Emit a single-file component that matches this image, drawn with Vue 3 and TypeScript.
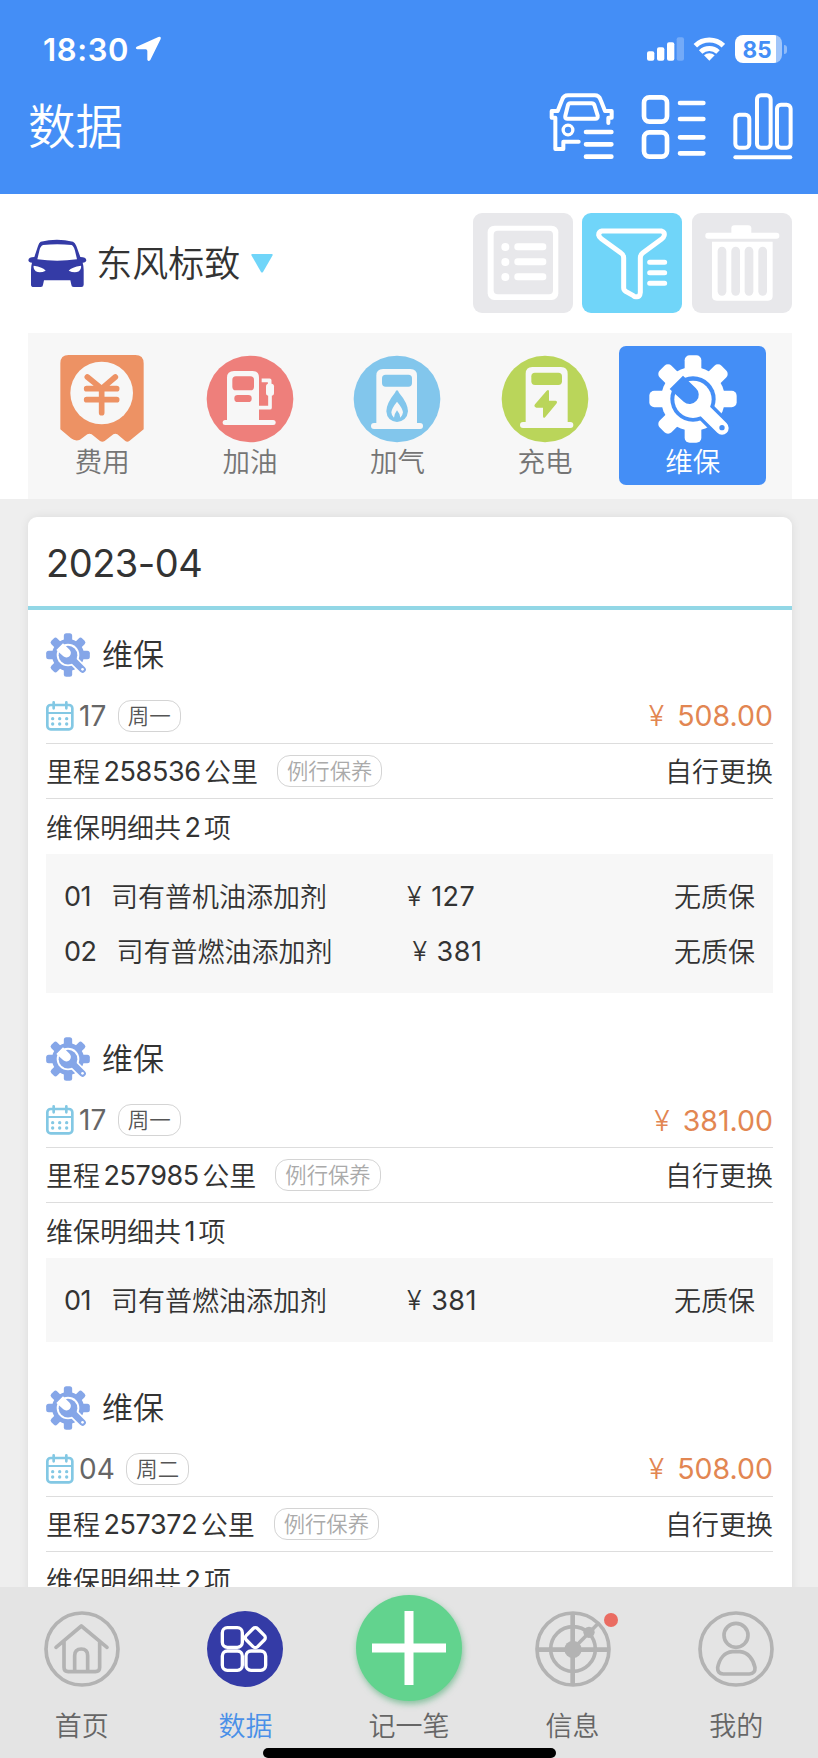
<script setup lang="ts">
interface Part {
  no: string
  name: string
  price: string
  warranty: string
}
interface MaintenanceRecord {
  day: string
  week: string
  amount: string
  mileage: string
  parts: Part[]
  count: number
}

const records: MaintenanceRecord[] = [
  {
    day: '17', week: '周一', amount: '508.00', mileage: '258536', count: 2,
    parts: [
      { no: '01', name: '司有普机油添加剂', price: '127', warranty: '无质保' },
      { no: '02', name: '司有普燃油添加剂', price: '381', warranty: '无质保' },
    ],
  },
  {
    day: '17', week: '周一', amount: '381.00', mileage: '257985', count: 1,
    parts: [{ no: '01', name: '司有普燃油添加剂', price: '381', warranty: '无质保' }],
  },
  {
    day: '04', week: '周二', amount: '508.00', mileage: '257372', count: 2,
    parts: [],
  },
]

const teeth: number[] = [0, 45, 90, 180, 225, 270, 315]
</script>

<template>
  <div class="screen">
    <svg class="defs" width="0" height="0">
      <symbol id="gear" viewBox="718 495 264 264">
        <g fill="currentColor">
          <circle cx="850" cy="627" r="96" />
          <rect v-for="a in teeth" :key="a" x="825" y="496" width="50" height="60" rx="15" :transform="`rotate(${a} 850 627)`" />
        </g>
        <circle cx="850" cy="627" r="68" fill="var(--hole)" />
        <path d="M872 649L950 727" stroke="var(--hole)" stroke-width="60" />
        <circle cx="850" cy="628" r="56" fill="currentColor" />
        <path d="M862 640L937 714" stroke="currentColor" stroke-width="40" stroke-linecap="round" />
        <path d="M780 597L820 557L858 594A27 27 0 0 1 822 635Z" fill="var(--hole)" />
        <circle cx="937" cy="713" r="8" fill="var(--hole)" />
      </symbol>
    </svg>

    <header class="header">
      <div class="status">
        <span class="time">18:30</span>
        <svg class="loc" width="26" height="26" viewBox="403 110 78 78">
          <path fill="#fff" d="M473 113Q482 110 480 119L449 182Q443 189 440 181V155Q440 150 435 150H410Q402 147 408 142Z" />
        </svg>
        <svg class="signal" width="78" height="28" viewBox="712 105 234 84">
          <g fill="#fff">
            <rect x="712" y="154" width="22" height="28" rx="6" />
            <rect x="742" y="142" width="22" height="40" rx="6" />
            <rect x="772" y="127" width="22" height="55" rx="6" />
            <rect x="801" y="112" width="22" height="70" rx="6" opacity=".25" />
            <path d="M899 182L883 166A23 23 0 0 1 915 166Z" />
          </g>
          <path fill="none" stroke="#fff" stroke-width="15" d="M857 137A60 60 0 0 1 941 137M873 156A38 38 0 0 1 925 156" />
        </svg>
        <div class="battery"><span>85</span></div>
        <i class="nub"></i>
      </div>
      <div class="titlebar">
        <h1>数据</h1>
        <svg class="hi first" width="66.7" height="70" viewBox="415 275 200 210">
          <g fill="none" stroke="#fff" stroke-linecap="round" stroke-linejoin="round">
            <path stroke-width="12" d="M596 368V352H606V332H586L573 299Q568 285 555 285H475Q462 285 457 299L444 332H426V352H437V446H461V424H507" />
            <path stroke-width="12" d="M482 309H546Q552 309 554 314L564 346Q565 355 557 355H472Q465 355 467 346L475 314Q477 309 482 309Z" />
            <circle cx="475" cy="389" r="14.5" stroke-width="10" />
            <path stroke-width="14" d="M529 395H605M529 432H605M529 469H605" />
          </g>
        </svg>
        <svg class="hi" width="66.7" height="70" viewBox="690 275 200 210">
          <g fill="none" stroke="#fff" stroke-width="14" stroke-linecap="round">
            <rect x="702" y="291" width="69" height="73" rx="16" />
            <rect x="702" y="396" width="69" height="73" rx="16" />
            <path d="M810 308H880M810 356H880M810 411H880M810 459H880" />
          </g>
        </svg>
        <svg class="hi" width="61.3" height="70" viewBox="968 275 184 210">
          <g fill="none" stroke="#fff" stroke-width="12">
            <rect x="978" y="343" width="42" height="99" rx="12" />
            <rect x="1043" y="285" width="41" height="157" rx="12" />
            <rect x="1103" y="313" width="41" height="129" rx="12" />
            <path stroke-linecap="round" d="M978 471H1143" />
          </g>
        </svg>
      </div>
    </header>

    <section class="panel">
      <div class="vehicle">
        <svg width="58.7" height="49" viewBox="83 147 176 147">
          <path fill="#343ba6" fill-rule="evenodd" d="M121 155Q170 143 218 155Q224 158 228 168L240 201Q257 201 258 211Q257 218 247 218Q250 228 250 240V284Q250 291 243 291H220Q213 291 213 284L210 271H131L128 284Q128 291 121 291H100Q92 291 92 284V240Q92 228 95 218Q85 218 84 211Q85 201 102 201L113 168Q116 158 121 155ZM128 165Q120 168 117 182L111 208Q170 216 230 208L224 182Q220 168 214 165Q170 160 128 165ZM100 227Q98 238 106 244Q120 250 136 242Q128 231 100 227ZM242 227Q214 231 205 242Q222 250 236 244Q244 238 242 227Z" />
        </svg>
        <span class="carname">东风标致</span>
        <svg class="caret" width="22" height="19" viewBox="0 0 22 19"><path fill="#70d5f9" d="M1 0H21Q22 0 21.5 1.500L12 18Q11 19 10 18L.5 1.500Q0 0 1 0Z" /></svg>
        <div class="tools">
          <div class="tool">
            <svg width="100" height="100" viewBox="190 69 300 300">
              <rect x="234" y="107" width="212" height="223" rx="20" fill="#fff" />
              <rect x="252" y="122" width="178" height="191" rx="12" fill="#e8e8eb" />
              <g fill="#fff">
                <circle cx="287" cy="171" r="12" /><circle cx="287" cy="216" r="12" /><circle cx="287" cy="261" r="12" />
                <rect x="314" y="160" width="96" height="21" rx="10" /><rect x="314" y="205" width="96" height="21" rx="10" /><rect x="314" y="250" width="96" height="21" rx="10" />
              </g>
            </svg>
          </div>
          <div class="tool on">
            <svg width="100" height="100" viewBox="518 70 300 300">
              <g fill="none" stroke="#fff" stroke-width="15" stroke-linecap="round" stroke-linejoin="round">
                <path d="M578 124H756Q768 127 764 139Q763 143 758 147L700 190Q693 195 693 204V308Q692 324 679 321Q676 321 672 318L649 305Q643 301 643 294V204Q643 195 635 190L576 147Q569 142 568 136Q568 126 578 124Z" />
                <path d="M721 218H766M721 249H766M721 281H766" />
              </g>
            </svg>
          </div>
          <div class="tool">
            <svg width="100" height="100" viewBox="848 70 300 300">
              <g fill="#fff">
                <rect x="888" y="129" width="222" height="18" rx="8" />
                <rect x="966" y="107" width="60" height="34" rx="9" />
                <path d="M908 156H1090V319Q1090 333 1076 333H922Q908 333 908 319Z" />
              </g>
              <g fill="#e8e8eb">
                <rect x="925" y="171" width="26" height="147" rx="13" /><rect x="966" y="171" width="26" height="147" rx="13" />
                <rect x="1006" y="171" width="26" height="147" rx="13" /><rect x="1047" y="171" width="26" height="147" rx="13" />
              </g>
            </svg>
          </div>
        </div>
      </div>

      <nav class="filters">
        <div class="filter">
          <svg width="88" height="88" viewBox="174 495 264 264">
            <path fill="#ed9264" d="M206 495H406Q431 495 431 520V718L388 753Q382 757 376 753L352 733Q346 729 340 733L314 753Q307 758 300 753L275 733Q268 729 262 733L240 749Q226 755 213 745L181 718V520Q181 495 206 495Z" />
            <circle cx="305" cy="609" r="94" fill="#f7f7f7" />
            <path fill="none" stroke="#ed9264" stroke-width="17" stroke-linecap="round" stroke-linejoin="round" d="M262 561L305 596L346 561M260 596H350M260 629H350M305 598V668" />
          </svg>
          <span>费用</span>
        </div>
        <div class="filter">
          <svg width="88" height="88" viewBox="616 495 264 264">
            <circle cx="748" cy="627" r="130" fill="#ee7f7b" />
            <g fill="#f7f7f7">
              <path d="M700 543H755Q775 543 775 563V691H679V563Q679 543 700 543Z" />
              <rect x="666" y="690" width="159" height="15" rx="7.500" />
              <rect x="796" y="581" width="24" height="36" rx="8" />
            </g>
            <path fill="none" stroke="#f7f7f7" stroke-width="11" stroke-linejoin="round" d="M783 571H807V590M808 610V653H774" />
            <rect x="695" y="559" width="65" height="42" rx="11" fill="#ee7f7b" />
            <rect x="701" y="615" width="52" height="21" rx="10" fill="#ee7f7b" />
          </svg>
          <span>加油</span>
        </div>
        <div class="filter">
          <svg width="88" height="88" viewBox="1059 495 264 264">
            <circle cx="1191" cy="627" r="130" fill="#82c6ec" />
            <g fill="#f7f7f7">
              <path d="M1149 537H1231Q1251 537 1251 557V702H1129V557Q1129 537 1149 537Z" />
              <rect x="1113" y="699" width="156" height="18" rx="9" />
            </g>
            <rect x="1146" y="554" width="90" height="36" rx="11" fill="#82c6ec" />
            <path fill="#82c6ec" d="M1191 601Q1194 601 1197 608Q1224 640 1224 664Q1221 693 1191 696Q1161 693 1159 664Q1159 640 1185 608Q1188 601 1191 601Z" />
            <path fill="#f7f7f7" d="M1191 635Q1208 655 1209 667Q1208 676 1201 683Q1199 670 1191 661Q1184 670 1182 683Q1174 676 1174 667Q1175 655 1191 635Z" />
          </svg>
          <span>加气</span>
        </div>
        <div class="filter">
          <svg width="88" height="88" viewBox="276 495 264 264">
            <circle cx="408" cy="627" r="130" fill="#bad55a" />
            <g fill="#f7f7f7">
              <path d="M370 531H456Q476 531 476 551V700H350V551Q350 531 370 531Z" />
              <rect x="333" y="696" width="160" height="18" rx="9" />
            </g>
            <rect x="367" y="548" width="92" height="37" rx="11" fill="#bad55a" />
            <path fill="#bad55a" d="M413 602Q419 597 420 604V632H440Q447 634 442 641L409 681Q403 687 402 679V653H382Q373 650 378 643Z" />
          </svg>
          <span>充电</span>
        </div>
        <div class="filter active">
          <svg width="88" height="88"><use href="#gear" /></svg>
          <span>维保</span>
        </div>
      </nav>
    </section>

    <main class="content">
      <div class="card">
        <h2>2023-04</h2>
        <article v-for="(r, i) in records" :key="i" class="entry">
          <div class="row kind">
            <svg width="44" height="44"><use href="#gear" /></svg>
            <span>维保</span>
          </div>
          <div class="row line date">
            <svg class="cal" width="28" height="30" viewBox="138 602 84 90">
              <g fill="none" stroke="#83c8e4" stroke-width="8">
                <rect x="142" y="614" width="75" height="73" rx="10" />
                <path stroke-width="6" d="M142 638H217" />
                <path stroke-linecap="round" d="M161 606V624M199 606V624" />
              </g>
              <g fill="#83c8e4">
                <circle v-for="n in 6" :key="n" :cx="158 + ((n - 1) % 3) * 21" :cy="n > 3 ? 671 : 655" r="5" />
              </g>
            </svg>
            <span class="day">{{ r.day }}</span>
            <span class="tag">{{ r.week }}</span>
            <span class="amount">¥<b>{{ r.amount }}</b></span>
          </div>
          <div class="row line">
            <span>里程</span><span class="num">{{ r.mileage }}</span><span>公里</span>
            <span class="tag pale">例行保养</span>
            <span class="end">自行更换</span>
          </div>
          <div class="row"><span>维保明细共</span><span class="num">{{ r.count }}</span><span>项</span></div>
          <div v-if="r.parts.length" class="parts">
            <div v-for="p in r.parts" :key="p.no" class="part">
              <span class="no">{{ p.no }}</span>
              <span class="pname">{{ p.name }}</span>
              <span class="price">¥<b>{{ p.price }}</b></span>
              <span class="end">{{ p.warranty }}</span>
            </div>
          </div>
        </article>
      </div>
    </main>

    <footer class="tabbar">
      <div class="tab">
        <svg width="76" height="76" viewBox="133 124 228 228">
          <g fill="none" stroke="#b3b3b3" stroke-width="11" stroke-linecap="round" stroke-linejoin="round">
            <circle cx="247" cy="238" r="108" />
            <path d="M169 233L245 169L322 233M193 214V293Q193 306 206 306H287Q300 306 300 293V214M225 305V258Q225 238 245 238Q264 238 264 258V305" />
          </g>
        </svg>
        <span>首页</span>
      </div>
      <div class="tab current">
        <svg width="76" height="76" viewBox="624 124 228 228">
          <circle cx="738" cy="238" r="114" fill="#343ba6" />
          <g fill="none" stroke="#fff" stroke-width="10">
            <rect x="670" y="174" width="60" height="59" rx="15" />
            <rect x="670" y="244" width="60" height="58" rx="15" />
            <rect x="741" y="244" width="59" height="58" rx="15" />
            <rect x="745" y="180" width="48" height="48" rx="10" transform="rotate(45 769 204)" />
          </g>
        </svg>
        <span>数据</span>
      </div>
      <div class="tab">
        <div class="add">
          <svg width="76" height="76" viewBox="0 0 76 76"><path stroke="#fff" stroke-width="9" d="M1 38H75M38 1V75" /></svg>
        </div>
        <span>记一笔</span>
      </div>
      <div class="tab">
        <div class="iconbox">
          <svg width="76" height="76" viewBox="381 124 228 228">
            <g fill="none" stroke="#b3b3b3" stroke-width="11">
              <circle cx="495" cy="238" r="108" />
              <circle cx="495" cy="238" r="67" />
              <path stroke-width="14" d="M386 240H604M494 129V347" />
              <path d="M495 238L572 160" />
            </g>
            <circle cx="495" cy="239" r="26" fill="#b3b3b3" />
            <circle cx="543" cy="188" r="17" fill="#b3b3b3" />
          </svg>
          <i class="badge"></i>
        </div>
        <span>信息</span>
      </div>
      <div class="tab">
        <svg width="76" height="76" viewBox="872 124 228 228">
          <g fill="none" stroke="#b3b3b3" stroke-width="11">
            <circle cx="986" cy="238" r="108" />
            <circle cx="986" cy="197" r="36" />
            <path d="M975 246H998C1022 248 1038 268 1043 294Q1044 312 1026 313H948Q930 312 931 294C936 268 951 248 975 246Z" />
          </g>
        </svg>
        <span>我的</span>
      </div>
      <i class="home"></i>
    </footer>
  </div>
</template>

<style>
body { margin: 0; }
</style>

<style scoped>
* { box-sizing: border-box; }
svg { display: block; flex: none; }
.defs { position: absolute; }
.screen {
  width: 818px;
  height: 1758px;
  display: flex;
  flex-direction: column;
  overflow: hidden;
  background: #eee;
  color: #333;
  font-family: Inter, "Noto Sans CJK SC", sans-serif;
  font-size: 27px;
  font-weight: 350;
  white-space: nowrap;
}
h1 { margin: 0; font-weight: 350; }
h2 { margin: 0; font-weight: 400; }
b, .num, .no, .day { font-weight: 400; }
.header { height: 194px; flex: none; background: #448ef6; color: #fff; }
.status { height: 90px; padding: 8px 31.500px 0 43px; display: flex; align-items: center; }
.time { font-size: 31px; font-weight: 580; width: 92px; letter-spacing: .6px; }
.signal { margin-left: auto; }
.battery {
  margin-left: 10px;
  width: 47px;
  height: 28px;
  border-radius: 8px;
  background: linear-gradient(90deg, #fff 0 40.500px, #a1c6fa 40.500px);
  color: #448ef6;
  display: flex;
  align-items: center;
  padding-left: 8px;
  font-size: 22.500px;
  font-weight: 650;
}
.nub { margin-left: 2px; width: 3px; height: 9px; border-radius: 0 5px 5px 0; background: #8fbbf9; }
.titlebar { display: flex; align-items: center; height: 73px; padding: 0 24.500px 0 28px; }
h1 { font-size: 47.500px; line-height: 70px; }
.hi { margin-left: 25.500px; }
.hi.first { margin-left: auto; }
.panel { height: 305px; flex: none; background: #fff; padding: 0 26px 0 28px; }
.vehicle { height: 139px; padding-bottom: 1px; display: flex; align-items: center; }
.carname { font-size: 36px; margin-left: 9.500px; padding-bottom: 4px; }
.caret { margin-left: 11px; }
.tools { margin-left: auto; display: flex; gap: 9.600px; }
.tool { width: 100px; height: 100px; border-radius: 9px; background: #e8e8eb; }
.tool.on { background: #70d5f9; }
.filters { height: 166px; background: #f7f7f7; display: flex; padding: 13px 0 0 .5px; }
.filter {
  width: 147.600px;
  height: 138.500px;
  padding-top: 9px;
  border-radius: 7px;
  display: flex;
  flex-direction: column;
  align-items: center;
  color: #757575;
}
.filter span { font-size: 27.500px; line-height: 38px; }
.filter.active { --hole: #448ef6; background: #448ef6; color: #fff; }
.content { flex: 1; min-height: 0; overflow: hidden; padding: 18px 26px 0 28px; }
.card { min-height: 100%; background: #fff; border-radius: 9px 9px 0 0; box-shadow: 0 0 10px rgba(0, 0, 0, .08); }
h2 { height: 93px; border-bottom: 4px solid #92d7e6; padding: 0 18px; font-size: 38px; letter-spacing: -.5px; line-height: 92px; }
.entry { padding: 17px 19px 21.400px 18px; }
.row { height: 55.300px; display: flex; align-items: center; }
.kind { --hole: #fff; color: #85a6e8; margin-bottom: 6px; }
.kind span { color: #333; font-size: 31px; margin-left: 12px; padding-bottom: 4px; }
.line { border-bottom: 1.500px solid #ddd; }
.date { padding-top: 1px; }
.day { font-size: 28px; color: #666; margin: 0 11.500px 0 5px; }
.tag {
  height: 32px;
  border: 1px solid #d4d4d4;
  border-radius: 13px;
  padding: 0 9px;
  font-size: 21.500px;
  line-height: 30px;
  color: #555;
}
.tag.pale { color: #aaa; margin-left: 19px; padding: 0 9px; font-size: 21.300px; }
.amount { margin-left: auto; color: #e28652; font-size: 28.500px; }
.amount b { margin-left: 13px; }
.num { margin: 0 3.500px; padding-top: 1px; letter-spacing: -.4px; }
.end { margin-left: auto; }
.parts { background: #f7f7f7; padding: 14px 18px; }
.part { height: 55.300px; padding-bottom: 1px; display: flex; align-items: center; }
.no { letter-spacing: -.5px; padding-top: 2px; }
.pname { margin-left: 20px; }
.price { margin-left: 80px; padding-top: 2px; }
.price b { margin-left: 9.500px; letter-spacing: .5px; }
.tabbar {
  position: relative;
  height: 171px;
  flex: none;
  background: #e4e4e4;
  display: flex;
  padding-top: 24px;
  color: #666;
}
.tab { flex: 1; display: flex; flex-direction: column; align-items: center; }
.tab > span { margin-top: 20px; line-height: 40px; }
.current { color: #4a90e8; }
.add {
  width: 106px;
  height: 106px;
  margin: -16px 0 -14px;
  border-radius: 50%;
  background: #62d38e;
  box-shadow: 1px 3px 6px rgba(70, 170, 110, .6);
  display: flex;
  align-items: center;
  justify-content: center;
}
.iconbox { position: relative; }
.badge { position: absolute; right: -7px; top: 2px; width: 14px; height: 14px; border-radius: 50%; background: #ea6c62; }
.home { position: absolute; left: 263px; bottom: 0; width: 293px; height: 10px; border-radius: 5px; background: #000; }
</style>
